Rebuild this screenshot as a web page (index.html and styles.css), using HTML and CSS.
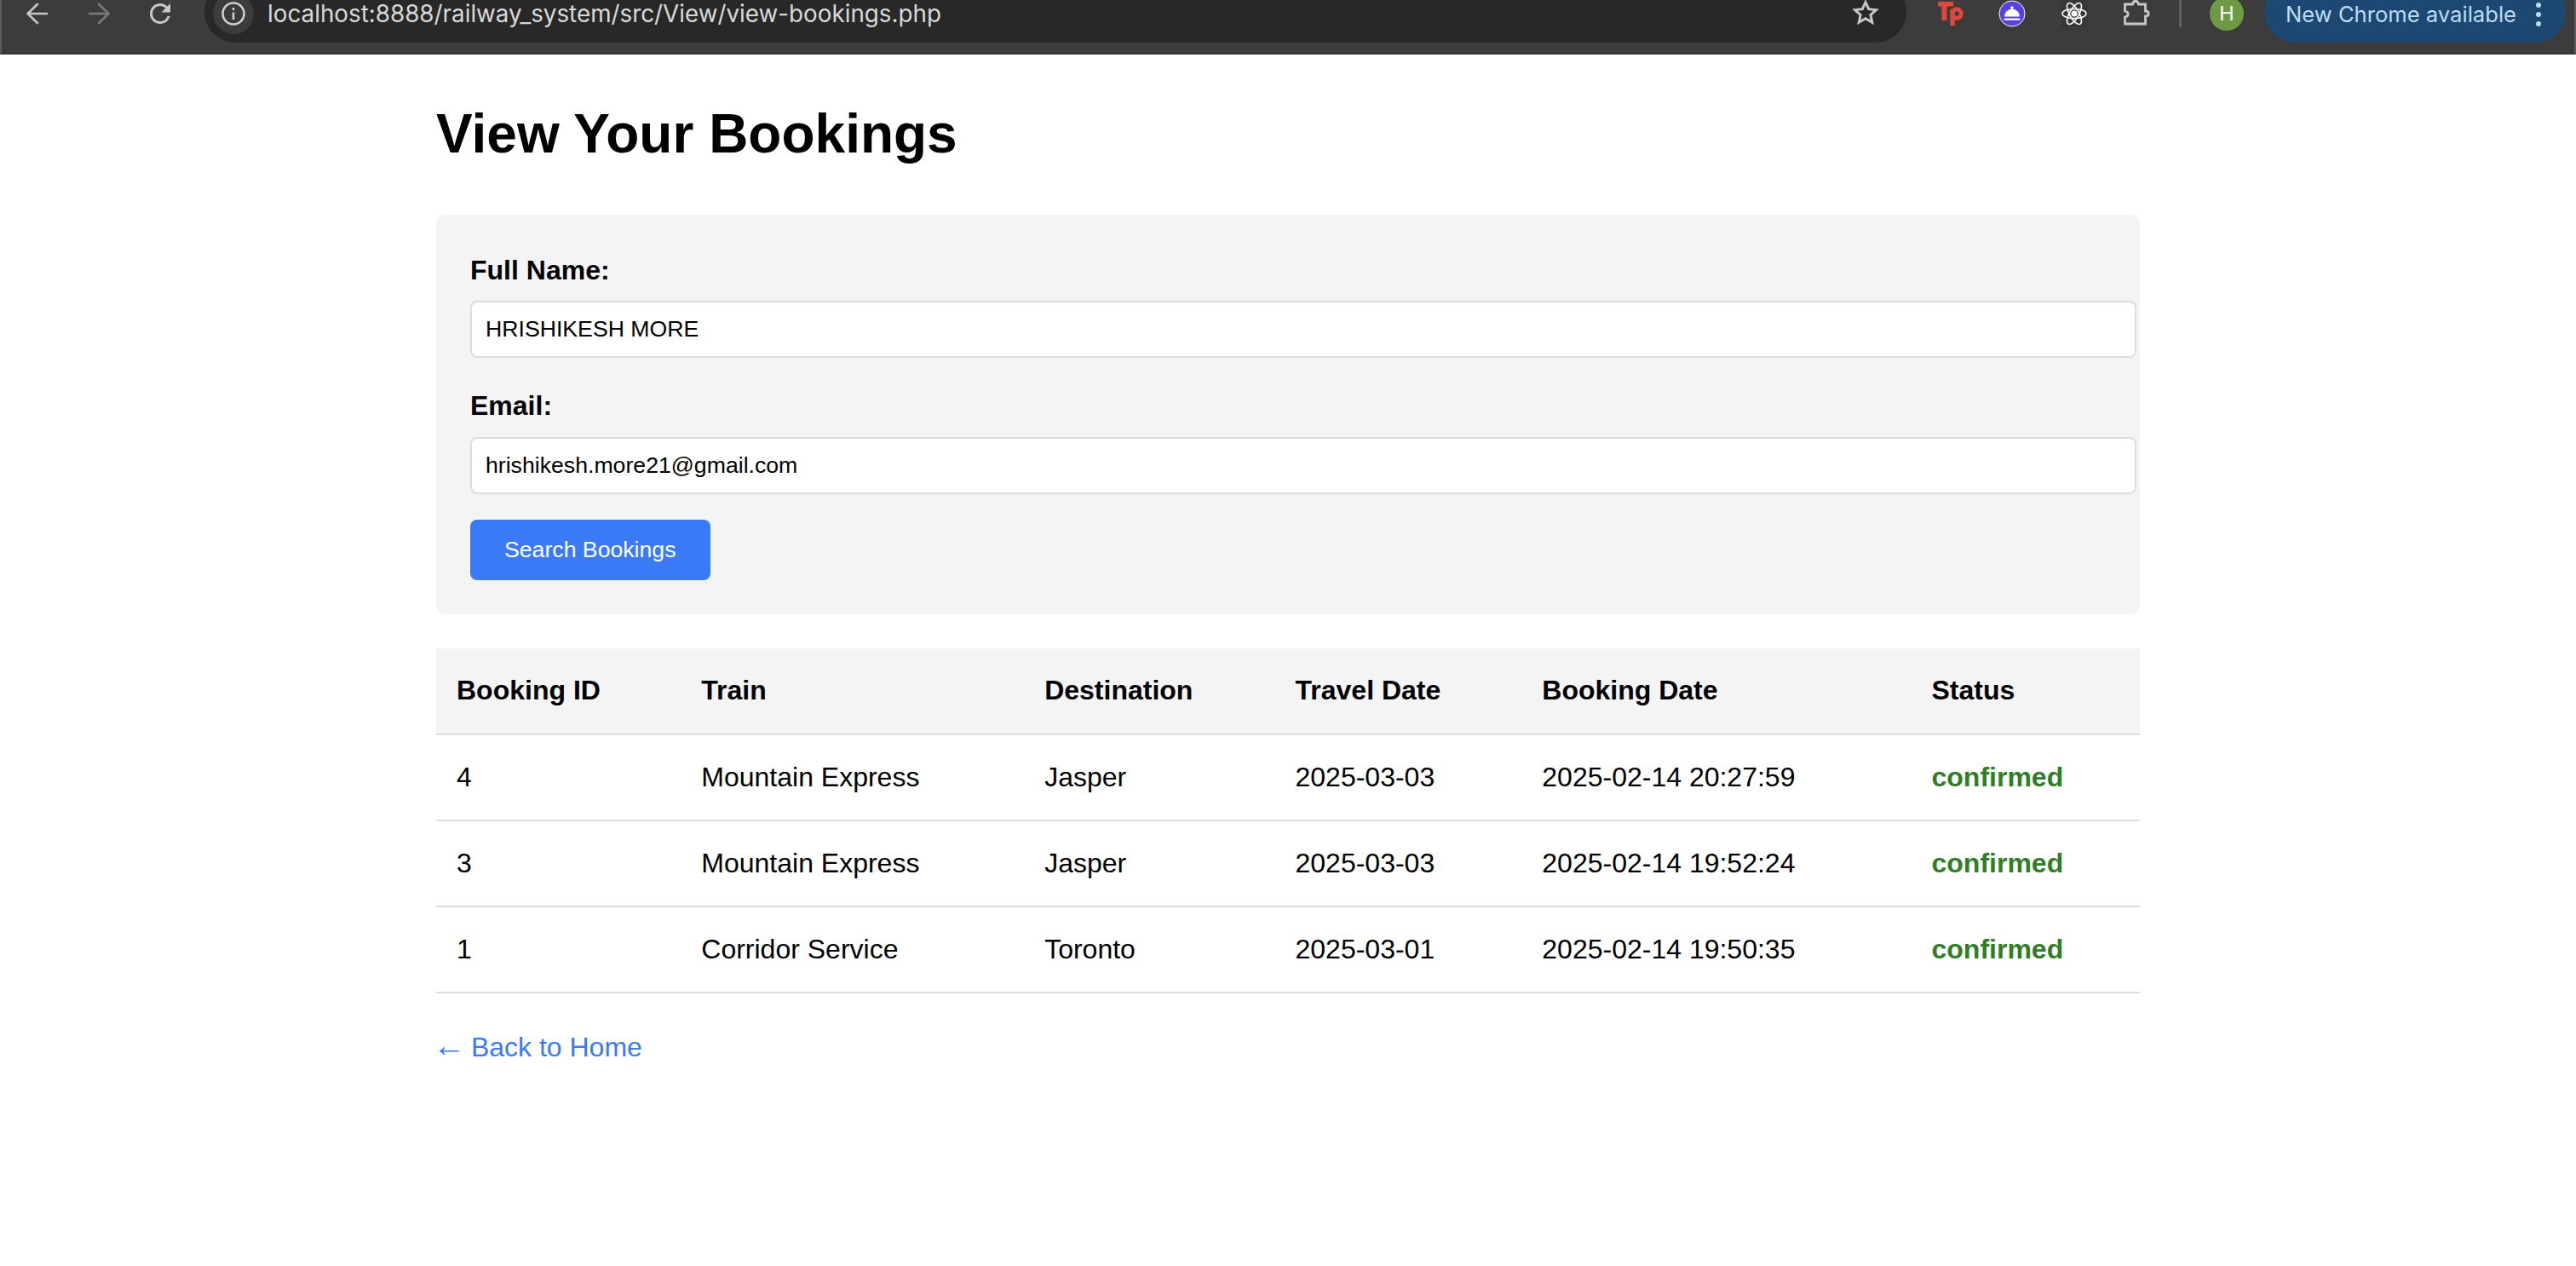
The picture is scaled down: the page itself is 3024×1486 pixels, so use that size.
FILE: index.html
```html
<!DOCTYPE html>
<html lang="en">
<head>
  <meta charset="UTF-8">
  <title>View Your Bookings</title>
  <link rel="stylesheet" href="styles.css">
</head>
<body>
  <div class="toolbar">
    <div class="nav-icons">
      <svg class="nav-icon" viewBox="0 0 32 32"><path d="M28 16H5M16.6 4.3 4.6 16l12 11.7" /></svg>
      <svg class="nav-icon dim" viewBox="0 0 32 32"><path d="M4 16h23M15.4 4.3 27.4 16l-12 11.7" /></svg>
      <svg class="nav-icon reload" viewBox="1.33 1.33 21.33 21.33"><path d="M17.65 6.35A7.958 7.958 0 0 0 12 4c-4.42 0-7.99 3.58-7.99 8s3.57 8 7.99 8c3.73 0 6.84-2.55 7.73-6h-2.08A5.99 5.99 0 0 1 12 18c-3.31 0-6-2.69-6-6s2.69-6 6-6c1.66 0 3.14.69 4.22 1.78L13 11h7V4l-2.35 2.35z" /></svg>
    </div>
    <div class="omnibox">
      <span class="site-info">
        <svg viewBox="0 0 32 32"><circle cx="16" cy="16" r="12.5" /><path d="M16 14.5V23M16 9v3" /></svg>
      </span>
      <span class="url">localhost:8888/railway_system/src/View/view-bookings.php</span>
      <svg class="star" viewBox="0 0 32 32"><path d="m16 3.5 3.7 8.2 8.8.9-6.6 5.9 1.9 8.8-7.8-4.6-7.8 4.6 1.9-8.8-6.6-5.9 8.8-.9z" /></svg>
    </div>
    <div class="extensions">
      <svg class="ext" viewBox="0 0 32 32" fill="#e0483e"><rect x="2" y="2" width="18" height="5.5" /><rect x="6.5" y="2" width="6" height="22" /><rect x="16.3" y="11" width="5.5" height="19" /><circle cx="24" cy="16" r="5.2" fill="none" stroke="#e0483e" stroke-width="5" /></svg>
      <svg class="ext" viewBox="0 0 32 32"><circle cx="16" cy="16" r="15" fill="#5b3fe0" stroke="#fff" stroke-width="1" /><path d="M7 19.5a9 9 0 0 1 18 0z" fill="#fff" /><circle cx="16" cy="9" r="1.8" fill="#fff" /><rect x="6.5" y="21.5" width="19" height="2.2" rx="1" fill="#fff" /></svg>
      <svg class="ext react" viewBox="0 0 32 32"><rect width="32" height="32" rx="2" fill="#383838" stroke="none" /><ellipse cx="16" cy="16" rx="14" ry="5.5" /><ellipse cx="16" cy="16" rx="14" ry="5.5" transform="rotate(60 16 16)" /><ellipse cx="16" cy="16" rx="14" ry="5.5" transform="rotate(120 16 16)" /><circle cx="16" cy="16" r="2.8" fill="#fff" /></svg>
      <svg class="ext puzzle" viewBox="0 0 32 32"><path d="M2.5 5h9c1-5 6-5 7 0h8v8c5 0 5 6 0 6v9H2.5v-8c5-1 5-6 0-7z" /></svg>
    </div>
    <span class="divider"></span>
    <span class="avatar">H</span>
    <div class="update-pill">
      <span>New Chrome available</span>
      <span class="kebab"><i></i><i></i><i></i></span>
    </div>
  </div>

  <div class="container">
    <h1>View Your Bookings</h1>

    <form class="search-form">
      <div class="form-group">
        <label for="name">Full Name:</label>
        <input type="text" id="name" value="HRISHIKESH MORE">
      </div>
      <div class="form-group">
        <label for="email">Email:</label>
        <input type="email" id="email" value="hrishikesh.more21@gmail.com">
      </div>
      <button type="submit">Search Bookings</button>
    </form>

    <table class="bookings">
      <thead>
        <tr>
          <th>Booking ID</th>
          <th>Train</th>
          <th>Destination</th>
          <th>Travel Date</th>
          <th>Booking Date</th>
          <th>Status</th>
        </tr>
      </thead>
      <tbody>
        <tr>
          <td>4</td>
          <td>Mountain Express</td>
          <td>Jasper</td>
          <td>2025-03-03</td>
          <td>2025-02-14 20:27:59</td>
          <td class="status">confirmed</td>
        </tr>
        <tr>
          <td>3</td>
          <td>Mountain Express</td>
          <td>Jasper</td>
          <td>2025-03-03</td>
          <td>2025-02-14 19:52:24</td>
          <td class="status">confirmed</td>
        </tr>
        <tr>
          <td>1</td>
          <td>Corridor Service</td>
          <td>Toronto</td>
          <td>2025-03-01</td>
          <td>2025-02-14 19:50:35</td>
          <td class="status">confirmed</td>
        </tr>
      </tbody>
    </table>

    <a class="back-link" href="#"><span class="arrow">←</span> Back to Home</a>
  </div>
</body>
</html>
```

FILE: styles.css
```css
body {
    margin: 0;
    background-color: white;
    color: black;
    font-family: "Liberation Sans", Arial, sans-serif;
    font-size: 32px;
    line-height: 1.6;
}

.toolbar {
    display: flex;
    align-items: flex-start;
    height: 62px;
    background-color: #3c3c3c;
    border-bottom: 2px solid #333;
    border-left: 2px solid #5a5a5a;
    border-right: 2px solid #5a5a5a;
    overflow: hidden;
}

.nav-icons {
    display: flex;
    gap: 40px;
    width: 238px;
    padding-left: 26px;
    box-sizing: border-box;
}

.nav-icon {
    width: 32px;
    height: 32px;
    fill: none;
    stroke: #c7c7c7;
    stroke-width: 2.6;
}

.nav-icon.dim {
    stroke: #7a7a7a;
}

.nav-icon.reload {
    fill: #c7c7c7;
    stroke: none;
}

.omnibox {
    display: flex;
    align-items: center;
    flex-shrink: 0;
    width: 1998px;
    height: 72px;
    margin-top: -22px;
    box-sizing: border-box;
    padding: 4px 32px 0 10px;
    background-color: #282828;
    border-radius: 36px;
}

.site-info {
    display: flex;
    align-items: center;
    justify-content: center;
    width: 48px;
    height: 48px;
    background-color: #3c3c3c;
    border-radius: 50%;
}

.site-info svg {
    width: 32px;
    height: 32px;
    fill: none;
    stroke: #d0d0d0;
    stroke-width: 2.6;
}

.url {
    flex: 1;
    margin-left: 16px;
    color: #d8d8d8;
    font-family: Inter, "Liberation Sans", sans-serif;
    font-size: 27.8px;
    line-height: 34px;
}

.star {
    width: 32px;
    height: 32px;
    margin-top: -2px;
    fill: none;
    stroke: #c7c7c7;
    stroke-width: 3;
}

.extensions {
    display: flex;
    flex-shrink: 0;
    gap: 41px;
    margin-left: 35px;
}

.ext {
    width: 32px;
    height: 32px;
}

.react {
    fill: none;
    stroke: #fff;
    stroke-width: 1.6;
}

.puzzle {
    fill: none;
    stroke: #c7c7c7;
    stroke-width: 2.8;
}

.divider {
    flex-shrink: 0;
    width: 3px;
    height: 32px;
    margin: 0 33px 0 34px;
    background-color: #5f5f5f;
}

.avatar {
    display: flex;
    align-items: center;
    justify-content: center;
    flex-shrink: 0;
    width: 40px;
    height: 40px;
    margin-top: -4px;
    background-color: #6f9a45;
    border-radius: 50%;
    color: white;
    font-size: 24px;
    line-height: 1;
}

.update-pill {
    display: flex;
    align-items: center;
    justify-content: space-between;
    flex-shrink: 0;
    width: 354px;
    height: 72px;
    margin: -22px 0 0 24px;
    padding: 6px 29px 0 25px;
    box-sizing: border-box;
    background-color: #1c4872;
    border-radius: 36px;
    color: #bcdcf5;
    font-family: Inter, "Liberation Sans", sans-serif;
    font-size: 25.6px;
    line-height: 30px;
}

.kebab {
    display: flex;
    flex-direction: column;
    gap: 5px;
}

.kebab i {
    width: 6px;
    height: 6px;
    background-color: #bcdcf5;
    border-radius: 50%;
}

.container {
    width: 2000px;
    margin: 0 auto;
    padding-top: 42px;
}

h1 {
    margin: 0 0 44px;
    font-size: 64px;
    line-height: 102px;
    font-weight: bold;
}

.search-form {
    padding: 40px;
    background-color: #f4f4f4;
    border-radius: 10px;
    margin-bottom: 40px;
}

.form-group {
    margin-bottom: 31px;
}

.form-group + .form-group {
    margin-bottom: 30px;
}

label {
    display: block;
    margin-bottom: 10px;
    font-weight: bold;
}

.form-group + .form-group label {
    margin-bottom: 11px;
}

input {
    width: 100%;
    padding: 16px;
    border: 2px solid #ddd;
    border-radius: 8px;
    font-family: "Liberation Sans", Arial, sans-serif;
    font-size: 26.67px;
    color: black;
}

button {
    display: block;
    padding: 20px 40px;
    background-color: #3b7af7;
    color: white;
    font-family: "Liberation Sans", Arial, sans-serif;
    font-size: 26.67px;
    line-height: 31px;
    border: none;
    border-radius: 8px;
}

.bookings {
    width: 100%;
    border-collapse: collapse;
}

.bookings th,
.bookings td {
    padding: 24px;
    text-align: left;
    border-bottom: 2px solid #ddd;
}

.bookings th {
    background-color: #f4f4f4;
}

.status {
    color: #2f7d24;
    font-weight: bold;
}

.back-link {
    display: inline-block;
    margin-top: 38px;
    color: #3b7af7;
    text-decoration: none;
}

.arrow {
    font-size: 38px;
    line-height: 1;
    margin: 0 -2px 0 -4px;
}
```
